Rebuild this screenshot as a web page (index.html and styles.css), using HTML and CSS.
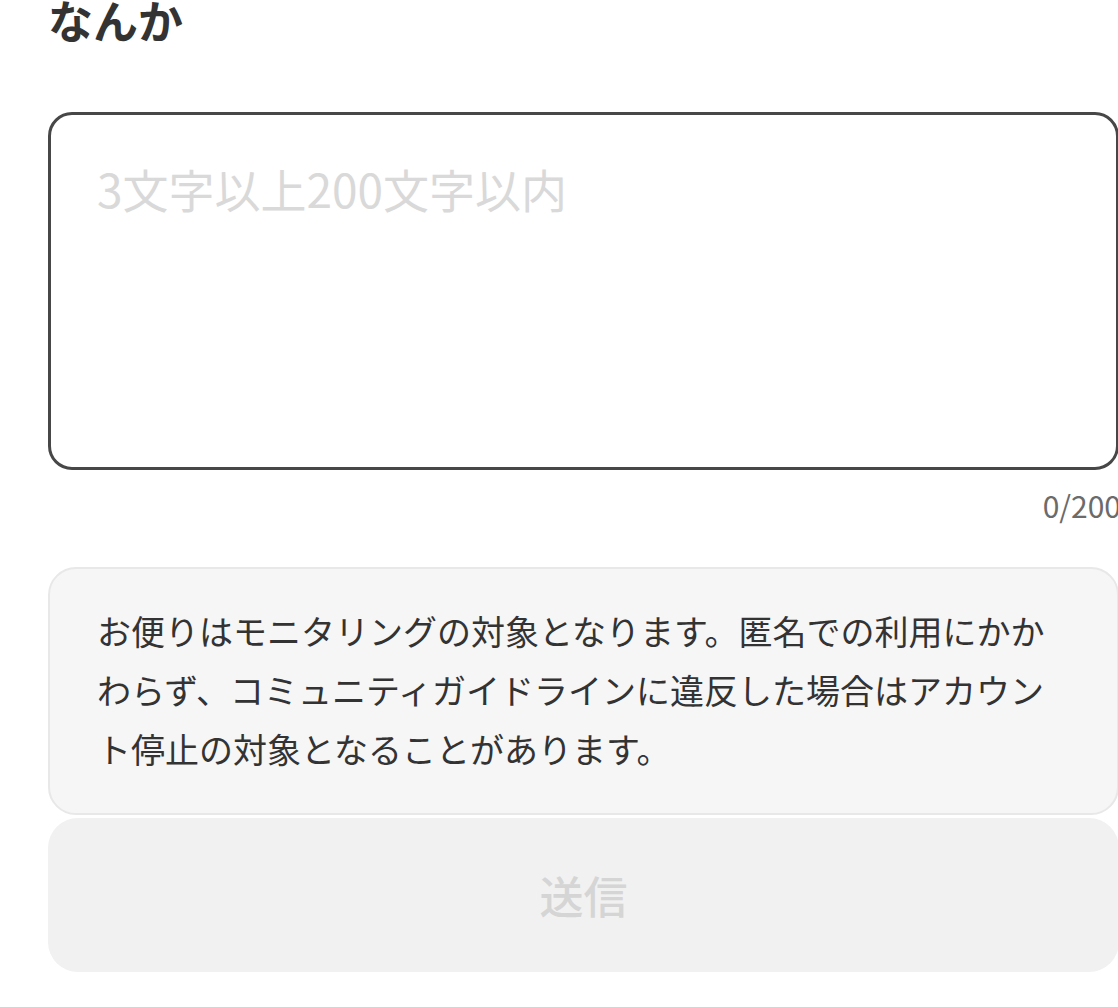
FILE: index.html
```html
<!DOCTYPE html>
<html lang="ja">
<head>
<meta charset="utf-8">
<title>なんか</title>
<link rel="stylesheet" href="styles.css">
</head>
<body>
<main class="page">
  <h1 class="title">なんか</h1>
  <textarea class="input" placeholder="3文字以上200文字以内"></textarea>
  <div class="counter">0/200</div>
  <div class="notice">お便りはモニタリングの対象となります。匿名での利用にかかわらず、コミュニティガイドラインに違反した場合はアカウント停止の対象となることがあります。</div>
  <button class="submit" type="button" disabled>送信</button>
</main>
</body>
</html>
```

FILE: styles.css
```css
html, body {
  margin: 0;
  padding: 0;
  background: #ffffff;
  overflow: hidden;
}

body {
  font-family: "Noto Sans CJK JP", "Noto Sans", sans-serif;
  color: #333333;
}

.page {
  width: 1071px;
  margin-left: 48px;
  display: flex;
  flex-direction: column;
}

.title {
  margin: 0;
  font-size: 45px;
  font-weight: 700;
  line-height: 40px;
  color: #333333;
}

.input {
  display: block;
  box-sizing: border-box;
  width: 100%;
  height: 358px;
  margin: 72px 0 0;
  padding: 39px 46px;
  border: 3px solid #474747;
  border-radius: 24px;
  background: #ffffff;
  font-family: "Noto Sans CJK JP", "Noto Sans", sans-serif;
  font-size: 46px;
  line-height: 1.5;
  color: #333333;
  resize: none;
  outline: none;
}

.input::placeholder {
  color: #d9d9d9;
}

.counter {
  margin-top: 13px;
  margin-right: -2px;
  text-align: right;
  font-size: 30px;
  line-height: 45px;
  color: #6b6b6b;
}

.notice {
  box-sizing: border-box;
  margin-top: 39px;
  padding: 32px 47px 35px;
  border: 2px solid #e8e8e8;
  border-radius: 28px;
  background: #f6f6f6;
  font-size: 34px;
  line-height: 59px;
  color: #333333;
}

.submit {
  box-sizing: border-box;
  height: 154px;
  margin-top: 3px;
  border: none;
  border-radius: 30px;
  background: #f1f1f1;
  font-family: "Noto Sans CJK JP", "Noto Sans", sans-serif;
  font-size: 44px;
  font-weight: 500;
  color: #d5d5d5;
}
```
